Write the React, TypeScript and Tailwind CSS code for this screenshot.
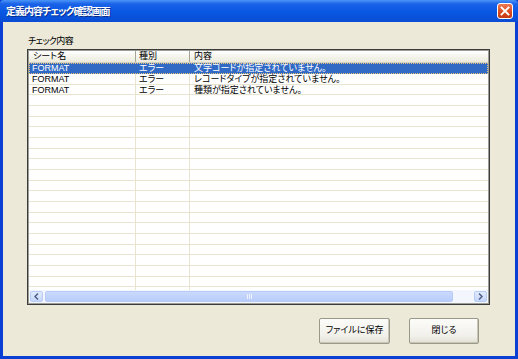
const ROWS = [
  { sheet: "FORMAT", kind: "エラー", msg: "文字コードが指定されていません。" },
  { sheet: "FORMAT", kind: "エラー", msg: "レコードタイプが指定されていません。" },
  { sheet: "FORMAT", kind: "エラー", msg: "種類が指定されていません。" },
];

const TOTAL_ROWS = 22;

const jp = "font-['Liberation_Sans','Noto_Sans_CJK_JP',sans-serif] [font-feature-settings:'palt']";

function CloseButton() {
  return (
    <div className="flex h-[16px] w-[16px] items-center justify-center rounded-[3px] border border-white bg-[linear-gradient(to_bottom,#ea7a55,#d9491f_60%,#c23a14)]">
      <svg width="10" height="10" viewBox="0 0 10 10">
        <path d="M1.5 1.5 L8.5 8.5 M8.5 1.5 L1.5 8.5" stroke="#fff" strokeWidth="1.8" strokeLinecap="square" />
      </svg>
    </div>
  );
}

function Arrow({ dir }: { dir: "left" | "right" }) {
  return (
    <div className="flex h-[11px] w-[13px] items-center justify-center rounded-[2px] border border-[#b8cdf5] bg-[linear-gradient(to_bottom,#e2ebfd,#c6d6fb)]">
      <svg width="5" height="7" viewBox="0 0 5 7">
        <path
          d={dir === "left" ? "M4 0.5 L1 3.5 L4 6.5" : "M1 0.5 L4 3.5 L1 6.5"}
          stroke="#4d6185"
          strokeWidth="1.5"
          fill="none"
        />
      </svg>
    </div>
  );
}

function ListView() {
  const rows = Array.from({ length: TOTAL_ROWS }, (_, i) => ROWS[i]);
  return (
    <div className="ml-[24px] mt-[2px] flex h-[256px] w-[463px] flex-col border border-[#3c3c3c] bg-white">
      <div className="flex h-full flex-col border border-[#9d9d98]">
        {/* header */}
        <div className={`flex h-[12px] shrink-0 border-b border-[#d5d1c1] bg-[linear-gradient(to_bottom,#ffffff,#ebeadb)] text-[9px] leading-[11px] text-black ${jp}`}>
          <div className="w-[107px] border-r border-[#a7a493] pl-[4px]">シート名</div>
          <div className="w-[54px] border-r border-[#a7a493] pl-[3px]">種別</div>
          <div className="flex-1 pl-[4px]">内容</div>
        </div>
        {/* rows */}
        <div className="flex-1 overflow-hidden">
          {rows.map((r, i) => (
            <div
              key={i}
              className={`flex text-[9px] leading-[10px] ${jp} ${i % 3 === 2 ? "h-[10px]" : "h-[11px]"} ${
                i === 0
                  ? "bg-[#316ac5] text-white outline-1 outline-dotted outline-[#e9c47a] -outline-offset-1"
                  : "border-b border-[#e8e4d0] text-black"
              }`}
            >
              <div className={`w-[107px] pl-[3px] ${i === 0 ? "" : "border-r border-[#e8e4d0]"}`}>{r?.sheet ?? ""}</div>
              <div className={`w-[54px] pl-[3px] ${i === 0 ? "" : "border-r border-[#e8e4d0]"}`}>{r?.kind ?? ""}</div>
              <div className="flex-1 pl-[4px]">{r?.msg ?? ""}</div>
            </div>
          ))}
        </div>
        {/* horizontal scrollbar */}
        <div className="flex h-[13px] shrink-0 items-center bg-[#f3f6fd] px-[1px]">
          <Arrow dir="left" />
          <div className="ml-[2px] flex h-[11px] w-[408px] items-center justify-center rounded-[2px] border border-[#b7cbf6] bg-[linear-gradient(to_bottom,#cad9fc,#b9cdfa)]">
            <div className="flex gap-[1px]">
              <div className="h-[5px] w-[1px] bg-[#eef3fe]" />
              <div className="h-[5px] w-[1px] bg-[#eef3fe]" />
              <div className="h-[5px] w-[1px] bg-[#eef3fe]" />
            </div>
          </div>
          <div className="flex-1" />
          <Arrow dir="right" />
        </div>
      </div>
    </div>
  );
}

function XpButton({ label, width }: { label: string; width: string }) {
  return (
    <div
      className={`flex h-[26px] ${width} items-center justify-center rounded-[2px] border border-[#9a9889] bg-[linear-gradient(to_bottom,#fcfcfa,#f1f0ea_70%,#e3e1d6)] shadow-[inset_-1px_-1px_0_#c9c6b6] text-[9px] text-black ${jp}`}
    >
      {label}
    </div>
  );
}

export default function App() {
  return (
    <div className="flex h-[359px] w-[518px] flex-col overflow-hidden bg-[#0a3fd4]">
      <div className="flex h-[22px] shrink-0 items-center justify-between rounded-t-[4px] bg-[linear-gradient(to_bottom,#4a95f8,#1a62e8_18%,#0857e2_55%,#0a4cd3)] pl-[6px] pr-[5px]">
        <span className={`text-[10px] font-bold tracking-[-1px] text-white [text-shadow:1px_1px_0_#0a2f8f] ${jp}`}>
          定義内容チェック確認画面
        </span>
        <CloseButton />
      </div>
      <div className="mx-[3px] mb-[3px] flex flex-1 flex-col bg-[#ece9d8] pt-[13px]">
        <div className={`ml-[25px] h-[12px] text-[9px] leading-[12px] tracking-[-0.6px] text-black ${jp}`}>チェック内容</div>
        <ListView />
        <div className="mt-[13px] flex justify-end gap-[19px] pr-[36px]">
          <XpButton label="ファイルに保存" width="w-[71px]" />
          <XpButton label="閉じる" width="w-[70px]" />
        </div>
      </div>
    </div>
  );
}
